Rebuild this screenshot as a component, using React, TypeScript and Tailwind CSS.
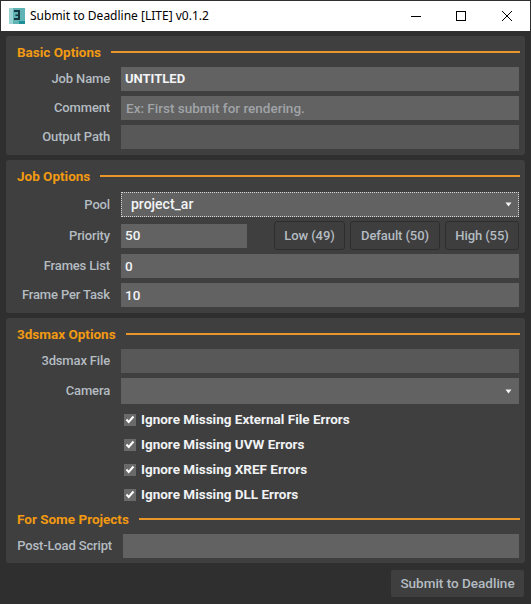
const font = "font-['Roboto',sans-serif]";

function Logo() {
  return (
    <svg width="16" height="16" viewBox="0 0 16 16" className="shrink-0">
      <rect width="16" height="16" fill="#5fb3b5" />
      <rect x="0" y="0" width="4" height="16" fill="#9ad4d4" />
      <rect x="10" y="13" width="6" height="3" fill="#1d8f96" />
      <path d="M5 2h6v10H5v-2h4V8H6.5V6.5H9V4H5z" fill="#17383d" />
    </svg>
  );
}

function TitleBar() {
  return (
    <div className="h-[30px] bg-white flex items-center pl-[8px] mx-px mt-px">
      <Logo />
      <span className="ml-[5px] text-[12px] text-black font-['Noto_Sans',sans-serif]">Submit to Deadline [LITE] v0.1.2</span>
      <div className="ml-auto flex items-center">
        <svg width="12" height="12" viewBox="0 0 12 12" className="mr-[33px]"><path d="M1 6.5h10" stroke="#000" strokeWidth="1" /></svg>
        <svg width="12" height="12" viewBox="0 0 12 12" className="mr-[34px]"><rect x="1.5" y="1.5" width="9" height="9" fill="none" stroke="#000" /></svg>
        <svg width="12" height="12" viewBox="0 0 12 12" className="mr-[17px]"><path d="M1 1l10 10M11 1L1 11" stroke="#000" strokeWidth="1" /></svg>
      </div>
    </div>
  );
}

function Heading({ title }: { title: string }) {
  return (
    <div className="h-5 flex items-center pl-[11px] pr-[5px]">
      <span className="text-[13.5px] leading-5 font-bold text-[#f29a12] whitespace-nowrap">{title}</span>
      <div className="ml-[10px] flex-1 h-[2px] bg-[#e8952a]" />
    </div>
  );
}

function Label({ text, w = "w-[104px]" }: { text: string; w?: string }) {
  return (
    <span className={`${w} shrink-0 text-right text-[13px] tracking-[-0.15px] font-medium text-[#b4bcc2] whitespace-nowrap`}>{text}</span>
  );
}

function Field({ value, placeholder, dim, bold }: { value?: string; placeholder?: string; dim?: boolean; bold?: boolean }) {
  return (
    <div className={`flex-1 h-6 flex items-center text-[13.5px] ${placeholder ? "px-[5px]" : "px-[4px]"} ${dim ? "bg-[#585858]" : "bg-[#626262]"} ${bold ? "font-bold text-[13px]" : "font-medium"} ${placeholder ? "text-[#a0a4a8]" : "text-[#f2f4f6]"}`}>
      {value ?? placeholder}
    </div>
  );
}

function Row({ label, className = "", children }: { label: string; className?: string; children: React.ReactNode }) {
  return (
    <div className={`flex items-center gap-[11px] pr-[6px] ${className}`}>
      <Label text={label} />
      {children}
    </div>
  );
}

function Arrow() {
  return (
    <svg width="7" height="5" viewBox="0 0 7 5" className="shrink-0">
      <path d="M0.5 0.5h6L3.5 4.5z" fill="#f4f4f4" />
    </svg>
  );
}

function PriorityButton({ text, w }: { text: string; w: string }) {
  return (
    <button className={`${w} h-[29px] rounded-[3px] border border-[#2e2e2e] bg-[#3e3e3e] text-[13px] tracking-[-0.1px] font-medium text-[#b4bcc2] whitespace-nowrap`}>{text}</button>
  );
}

function Check({ label }: { label: string }) {
  return (
    <div className="h-[25px] flex items-center pl-[118px]">
      <span className="w-3 h-3 bg-[#6a6a6a] flex items-center justify-center shrink-0">
        <svg width="10" height="9" viewBox="0 0 10 9"><path d="M1.5 4.5l2.2 2.5L8.5 1.5" fill="none" stroke="#fff" strokeWidth="2" /></svg>
      </span>
      <span className="ml-[5px] text-[13.5px] font-bold text-[#f0f2f4]">{label}</span>
    </div>
  );
}

export default function App() {
  return (
    <div className={`w-[531px] h-[604px] bg-[#2f2f2f] flex flex-col overflow-hidden ${font}`}>
      <TitleBar />
      <div className="flex-1 flex flex-col gap-[5px] pt-[5px] px-[6px]">
        <section className="h-[119px] bg-[#3f3f3f] rounded-[3px] pt-[6px] flex flex-col">
          <Heading title="Basic Options" />
          <div className="flex flex-col gap-[5px] mt-[5px]">
            <Row label="Job Name"><Field value="UNTITLED" bold /></Row>
            <Row label="Comment"><Field placeholder="Ex: First submit for rendering." /></Row>
            <Row label="Output Path"><Field dim /></Row>
          </div>
        </section>

        <section className="h-[153px] bg-[#3f3f3f] rounded-[3px] pt-[6px] flex flex-col">
          <Heading title="Job Options" />
          <div className="flex flex-col mt-[6px]">
            <Row label="Pool">
              <div className="flex-1 h-[25px] bg-[#626262] border border-dotted border-[#d8d8d8] flex items-center justify-between pl-[9px] pr-[6px] text-[14px] font-medium text-[#f2f4f6]">
                project_ar
                <Arrow />
              </div>
            </Row>
            <Row label="Priority" className="mt-[4px] h-[29px]">
              <div className="w-[127px] h-6 flex items-center px-[4px] bg-[#626262] text-[13.5px] font-medium text-[#f2f4f6]">50</div>
              <div className="ml-[16px] flex gap-[5px]">
                <PriorityButton text="Low (49)" w="w-[71px]" />
                <PriorityButton text="Default (50)" w="w-[90px]" />
                <PriorityButton text="High (55)" w="w-[74px]" />
              </div>
            </Row>
            <Row label="Frames List" className="mt-[4px]"><Field value="0" /></Row>
            <Row label="Frame Per Task" className="mt-[5px]"><Field value="10" /></Row>
          </div>
        </section>

        <section className="h-[245px] bg-[#3f3f3f] rounded-[3px] pt-[6px] flex flex-col">
          <Heading title="3dsmax Options" />
          <Row label="3dsmax File" className="mt-[5px]"><Field dim /></Row>
          <Row label="Camera" className="mt-[5px]">
            <div className="flex-1 h-[26px] bg-[#626262] flex items-center justify-end pr-[7px]"><Arrow /></div>
          </Row>
          <div className="flex flex-col mt-[3px]">
            <Check label="Ignore Missing External File Errors" />
            <Check label="Ignore Missing UVW Errors" />
            <Check label="Ignore Missing XREF Errors" />
            <Check label="Ignore Missing DLL Errors" />
          </div>
          <div className="mt-[2px]"><Heading title="For Some Projects" /></div>
          <div className="flex items-center gap-[11px] pr-[6px] mt-[5px]">
            <Label text="Post-Load Script" w="w-[106px]" />
            <Field />
          </div>
        </section>

        <div className="flex justify-end mt-[2px] pr-px">
          <button className="w-[133px] h-[27px] rounded-[2px] bg-[#3f3f3f] text-[13.5px] font-medium text-[#b4bcc2]">Submit to Deadline</button>
        </div>
      </div>
    </div>
  );
}
